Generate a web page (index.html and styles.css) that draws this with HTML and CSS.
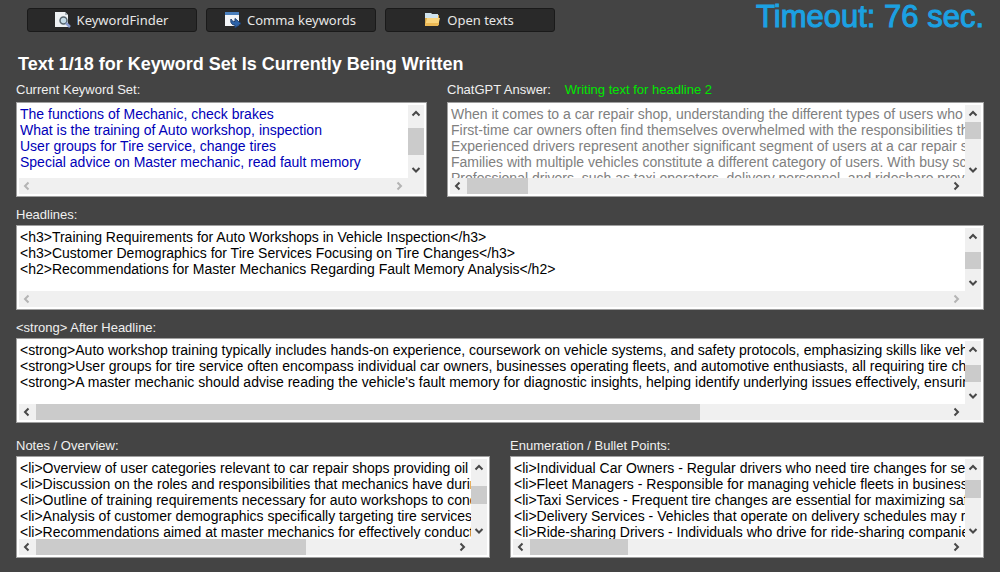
FILE: index.html
```html
<!DOCTYPE html>
<html lang="en">

<head>
    <meta charset="UTF-8">
    <meta name="viewport" content="width=device-width, initial-scale=1.0">
    <title>Text writer</title>
    <link rel="stylesheet" href="styles.css">
</head>

<body>
    <!-- Arrows shared by all scrollbars -->
    <svg class="sprite" aria-hidden="true">
        <symbol id="arrow-up" viewBox="0 0 10 10"><path d="M1.5 6.500L5 3L8.500 6.500" /></symbol>
        <symbol id="arrow-down" viewBox="0 0 10 10"><path d="M1.5 3L5 6.500L8.500 3" /></symbol>
        <symbol id="arrow-left" viewBox="0 0 10 10"><path d="M6.500 1.500L3 5L6.500 8.500" /></symbol>
        <symbol id="arrow-right" viewBox="0 0 10 10"><path d="M3.500 1.500L7 5L3.500 8.500" /></symbol>
    </svg>

    <header class="toolbar">
        <button class="tool-button" type="button">
            <svg width="18" height="18" viewBox="0 0 18 18" aria-hidden="true">
                <path d="M1 1h10l3 3v12H1z" fill="#eef1f3" />
                <path d="M11 1l3 3h-3z" fill="#a9b3ba" />
                <circle cx="9.500" cy="9.500" r="3.500" fill="#c3dae6" stroke="#56646d" stroke-width="1.500" />
                <path d="M12 12l4 4" stroke="#8c9fd0" stroke-width="2.500" />
            </svg>
            KeywordFinder
        </button>
        <button class="tool-button" type="button">
            <svg width="18" height="18" viewBox="0 0 18 18" aria-hidden="true">
                <path d="M1 1h14v14H1z" fill="#f3f5f8" />
                <path d="M1 1h14v3H1z" fill="#4a7fbd" />
                <path d="M7 8c1 2 2 2.500 4 2.500V7.500l6 5-6 4.500v-3c-3 0-5-2-4-6z" fill="#2c62a8" stroke="#1f3f6e" stroke-width="1" />
            </svg>
            Comma keywords
        </button>
        <button class="tool-button" type="button">
            <svg width="18" height="18" viewBox="0 0 18 18" aria-hidden="true">
                <path d="M1 2h6l1 2h7v10H1z" fill="#d9a648" />
                <path d="M1 2h6l1 1h6v4H1z" fill="#cfe3ee" />
                <path d="M3 7h13l-2 8H1z" fill="#fad57e" />
                <path d="M1 15h13l1-3H2z" fill="#edb954" />
            </svg>
            Open texts
        </button>
        <p class="timeout">Timeout: 76 sec.</p>
    </header>

    <main>
        <h1>Text 1/18 for Keyword Set Is Currently Being Written</h1>

        <div class="row row-top">
            <section>
                <div class="caption"><label for="keywords">Current Keyword Set:</label></div>
                <div class="memo memo-tall">
                    <textarea id="keywords" class="blue" wrap="off" readonly>
The functions of Mechanic, check brakes
What is the training of Auto workshop, inspection
User groups for Tire service, change tires
Special advice on Master mechanic, read fault memory</textarea>
                    <div class="bar bar-v">
                        <svg><use href="#arrow-up" /></svg>
                        <div class="track"><div class="thumb" style="top: 15%; height: 69%"></div></div>
                        <svg><use href="#arrow-down" /></svg>
                    </div>
                    <div class="bar bar-h disabled">
                        <svg><use href="#arrow-left" /></svg>
                        <div class="track"></div>
                        <svg><use href="#arrow-right" /></svg>
                    </div>
                </div>
            </section>
            <section>
                <div class="caption">
                    <label for="answer">ChatGPT Answer:</label>
                    <span class="status">Writing text for headline 2</span>
                </div>
                <div class="memo memo-tall">
                    <textarea id="answer" class="gray" wrap="off" readonly>
When it comes to a car repair shop, understanding the different types of users who seek services
First-time car owners often find themselves overwhelmed with the responsibilities that come with
Experienced drivers represent another significant segment of users at a car repair shop. They
Families with multiple vehicles constitute a different category of users. With busy schedules
Professional drivers, such as taxi operators, delivery personnel, and rideshare providers, rely</textarea>
                    <div class="bar bar-v">
                        <svg><use href="#arrow-up" /></svg>
                        <div class="track"><div class="thumb" style="top: 0; height: 44%"></div></div>
                        <svg><use href="#arrow-down" /></svg>
                    </div>
                    <div class="bar bar-h">
                        <svg><use href="#arrow-left" /></svg>
                        <div class="track"><div class="thumb" style="width: 12.7%"></div></div>
                        <svg><use href="#arrow-right" /></svg>
                    </div>
                </div>
            </section>
        </div>

        <section class="row-wide">
            <div class="caption"><label for="headlines">Headlines:</label></div>
            <div class="memo">
                <textarea id="headlines" wrap="off" readonly>
&lt;h3&gt;Training Requirements for Auto Workshops in Vehicle Inspection&lt;/h3&gt;
&lt;h3&gt;Customer Demographics for Tire Services Focusing on Tire Changes&lt;/h3&gt;
&lt;h2&gt;Recommendations for Master Mechanics Regarding Fault Memory Analysis&lt;/h2&gt;</textarea>
                <div class="bar bar-v">
                    <svg><use href="#arrow-up" /></svg>
                    <div class="track"><div class="thumb" style="top: 24%; height: 60%"></div></div>
                    <svg><use href="#arrow-down" /></svg>
                </div>
                <div class="bar bar-h disabled">
                    <svg><use href="#arrow-left" /></svg>
                    <div class="track"></div>
                    <svg><use href="#arrow-right" /></svg>
                </div>
            </div>
        </section>

        <section class="row-wide">
            <div class="caption"><label for="strong">&lt;strong&gt; After Headline:</label></div>
            <div class="memo">
                <textarea id="strong" wrap="off" readonly>
&lt;strong&gt;Auto workshop training typically includes hands-on experience, coursework on vehicle systems, and safety protocols, emphasizing skills like vehicle inspection.&lt;/strong&gt;
&lt;strong&gt;User groups for tire service often encompass individual car owners, businesses operating fleets, and automotive enthusiasts, all requiring tire changes.&lt;/strong&gt;
&lt;strong&gt;A master mechanic should advise reading the vehicle's fault memory for diagnostic insights, helping identify underlying issues effectively, ensuring accurate repairs.&lt;/strong&gt;</textarea>
                <div class="bar bar-v">
                    <svg><use href="#arrow-up" /></svg>
                    <div class="track"><div class="thumb" style="top: 24%; height: 60%"></div></div>
                    <svg><use href="#arrow-down" /></svg>
                </div>
                <div class="bar bar-h">
                    <svg><use href="#arrow-left" /></svg>
                    <div class="track"><div class="thumb" style="width: 72.8%"></div></div>
                    <svg><use href="#arrow-right" /></svg>
                </div>
            </div>
        </section>

        <div class="row row-bottom">
            <section>
                <div class="caption"><label for="notes">Notes / Overview:</label></div>
                <div class="memo memo-lists">
                    <textarea id="notes" wrap="off" readonly>
&lt;li&gt;Overview of user categories relevant to car repair shops providing oil changes&lt;/li&gt;
&lt;li&gt;Discussion on the roles and responsibilities that mechanics have during brake checks&lt;/li&gt;
&lt;li&gt;Outline of training requirements necessary for auto workshops to conduct inspections&lt;/li&gt;
&lt;li&gt;Analysis of customer demographics specifically targeting tire services, particularly&lt;/li&gt;
&lt;li&gt;Recommendations aimed at master mechanics for effectively conducting analysis&lt;/li&gt;</textarea>
                    <div class="bar bar-v">
                        <svg><use href="#arrow-up" /></svg>
                        <div class="track"><div class="thumb" style="top: 22%; height: 39%"></div></div>
                        <svg><use href="#arrow-down" /></svg>
                    </div>
                    <div class="bar bar-h">
                        <svg><use href="#arrow-left" /></svg>
                        <div class="track"><div class="thumb" style="width: 64.7%"></div></div>
                        <svg><use href="#arrow-right" /></svg>
                    </div>
                </div>
            </section>
            <section>
                <div class="caption"><label for="bullets">Enumeration / Bullet Points:</label></div>
                <div class="memo memo-lists">
                    <textarea id="bullets" wrap="off" readonly>
&lt;li&gt;Individual Car Owners - Regular drivers who need tire changes for seasonal reasons&lt;/li&gt;
&lt;li&gt;Fleet Managers - Responsible for managing vehicle fleets in businesses and more&lt;/li&gt;
&lt;li&gt;Taxi Services - Frequent tire changes are essential for maximizing safety and uptime&lt;/li&gt;
&lt;li&gt;Delivery Services - Vehicles that operate on delivery schedules may require changes&lt;/li&gt;
&lt;li&gt;Ride-sharing Drivers - Individuals who drive for ride-sharing companies want safety&lt;/li&gt;</textarea>
                    <div class="bar bar-v">
                        <svg><use href="#arrow-up" /></svg>
                        <div class="track"><div class="thumb" style="top: 9%; height: 39%"></div></div>
                        <svg><use href="#arrow-down" /></svg>
                    </div>
                    <div class="bar bar-h">
                        <svg><use href="#arrow-left" /></svg>
                        <div class="track"><div class="thumb" style="width: 23.4%"></div></div>
                        <svg><use href="#arrow-right" /></svg>
                    </div>
                </div>
            </section>
        </div>
    </main>
</body>

</html>
```
FILE: styles.css
```css
* {
    box-sizing: border-box;
}

body {
    margin: 0;
    padding: 0 16px 13px;
    background: #444444;
    color: #f0f0f0;
    font-family: "Liberation Sans", Arial, sans-serif;
    font-size: 13px;
}

.sprite {
    display: none;
}

/* Toolbar */
.toolbar {
    display: flex;
    align-items: flex-start;
    gap: 9px;
    height: 52px;
    padding: 8px 0 0 11px;
}

.tool-button {
    display: flex;
    align-items: center;
    justify-content: center;
    gap: 5px;
    width: 170px;
    height: 24px;
    padding: 0 2px 0 0;
    border: 1px solid #1a1a1a;
    border-radius: 3px;
    background: #292929;
    color: #e6e6e6;
    font-family: "Noto Sans", sans-serif;
    font-size: 13px;
}

.timeout {
    margin: -8px 0 0 auto;
    color: #1ba1e2;
    font-size: 31px;
    line-height: 34px;
    white-space: nowrap;
    -webkit-text-stroke: 1px #1ba1e2;
}

h1 {
    margin: 0;
    padding-left: 2px;
    font-size: 18px;
    line-height: 24px;
    color: #ffffff;
}

/* Rows of memos */
.row {
    display: grid;
    gap: 20px;
}

.row-top {
    grid-template-columns: 411fr 537fr;
    margin-top: 4px;
}

.row-bottom {
    grid-template-columns: 1fr 1fr;
    margin-top: 13px;
}

.row-wide {
    margin-top: 8px;
}

section {
    min-width: 0;
}

.caption {
    display: flex;
    gap: 14px;
    line-height: 20px;
    white-space: nowrap;
}

.row-top .caption {
    padding-bottom: 2px;
}

.status {
    color: #00e800;
}

.memo {
    display: grid;
    grid-template-columns: 1fr 16px;
    grid-template-rows: 1fr 16px;
    height: 85px;
    padding: 2px;
    border: 1px solid #a0a0a0;
    background: linear-gradient(#f0f0f0, #f0f0f0) content-box, #ffffff;
}

.memo-tall {
    height: 95px;
}

.memo-lists {
    height: 102px;
}

textarea {
    width: 100%;
    height: 100%;
    margin: 0;
    padding: 1px 0 0 1px;
    border: 0;
    outline: 0;
    resize: none;
    overflow: hidden;
    background: #ffffff;
    color: #000000;
    font: inherit;
    font-size: 14px;
    line-height: 16px;
}

.blue {
    color: #0000b8;
}

.gray {
    color: #808080;
}

/* Scrollbars */
.bar {
    display: flex;
    background: #f0f0f0;
}

.bar-v {
    flex-direction: column;
}

.bar svg {
    flex: none;
    width: 10px;
    height: 10px;
    margin: 3px 4px 3px 3px;
    fill: none;
    stroke: #484848;
    stroke-width: 2;
}

.bar-v svg {
    margin: 4px 3px 3px;
}

.bar.disabled svg {
    stroke: #b4b4b4;
}

.track {
    position: relative;
    flex: 1;
}

.thumb {
    position: relative;
    height: 100%;
    background: #cbcbcb;
}
```
